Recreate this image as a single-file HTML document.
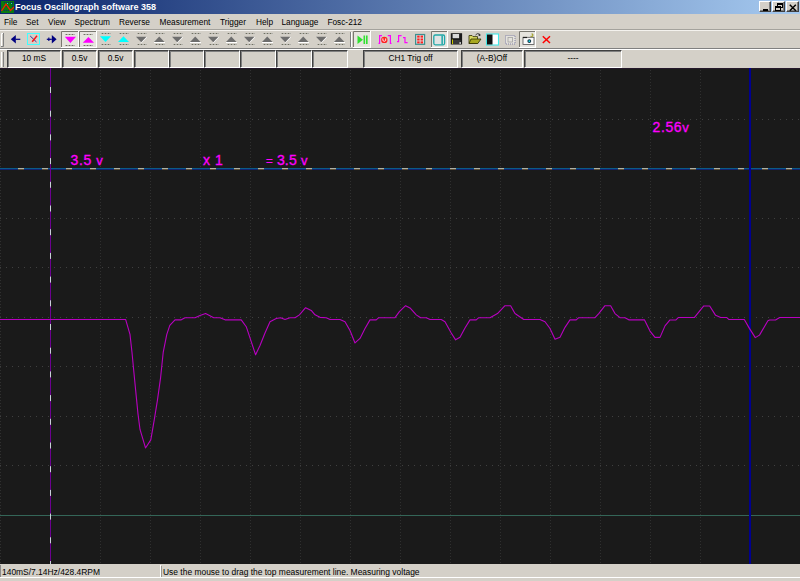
<!DOCTYPE html>
<html><head><meta charset="utf-8">
<style>
*{margin:0;padding:0;box-sizing:border-box}
html,body{width:800px;height:581px;overflow:hidden;background:#d4d0c8;font-family:"Liberation Sans", sans-serif;}
.abs{position:absolute}
#title{left:0;top:0;width:800px;height:14px;background:linear-gradient(to right,#0a246a,#a6caf0);}
#title .t{position:absolute;left:15px;top:1px;font-size:9px;font-weight:bold;color:#fff;line-height:12px;white-space:nowrap}
.menu{position:absolute;top:17px;font-size:8.3px;line-height:11px;color:#000;white-space:nowrap}
.hl{position:absolute;left:0;width:800px;height:1px}
.panel{position:absolute;top:50px;height:18px;border-top:1px solid #404040;border-left:1px solid #404040;border-right:1px solid #fff;border-bottom:1px solid #fff;box-shadow:inset 1px 1px 0 #808080;font-size:8.3px;line-height:15px;text-align:center;color:#000;white-space:nowrap}
#plot{left:0;top:68px;width:800px;height:496px;background:#1a1a1a;border-top:1px solid #24182a}
.lbl{position:absolute;font-size:14px;color:#ff00ff;-webkit-text-stroke:0.3px #ff00ff;letter-spacing:0.6px;line-height:14px;white-space:nowrap}
.wbtn{position:absolute;top:1px;width:13px;height:11px;background:#d4d0c8;border-top:1px solid #fff;border-left:1px solid #fff;border-right:1px solid #404040;border-bottom:1px solid #404040;box-shadow:inset -1px -1px 0 #808080}
.sb{position:absolute;top:567px;font-size:8.45px;line-height:11px;color:#000;white-space:nowrap}
</style></head><body>
<div id="title" class="abs">
  <svg class="abs" style="left:1px;top:1px" width="13" height="12" viewBox="0 0 13 12">
    <rect x="0" y="0" width="13" height="12" fill="#0a7a10"/>
    <g fill="#0a2a6a"><rect x="3" y="1" width="1" height="1"/><rect x="5" y="1" width="1" height="1"/><rect x="7" y="1" width="1" height="1"/><rect x="9" y="1" width="1" height="1"/><rect x="11" y="1" width="1" height="1"/><rect x="11" y="3" width="1" height="1"/><rect x="5" y="5" width="1" height="1"/><rect x="11" y="5" width="1" height="1"/><rect x="3" y="9" width="1" height="1"/><rect x="5" y="9" width="1" height="1"/><rect x="7" y="9" width="1" height="1"/><rect x="9" y="9" width="1" height="1"/></g>
    <rect x="6" y="2" width="1" height="1" fill="#20d0d0"/><rect x="10" y="2" width="1" height="1" fill="#20d0d0"/>
    <polyline points="0.5,10 5,3.2 9.5,9.5 13,6" fill="none" stroke="#f02000" stroke-width="1.3"/>
  </svg>
  <div class="t">Focus Oscillograph software 358</div>
  <div class="wbtn" style="left:759px;width:12px"><div class="abs" style="left:3px;top:7px;width:5px;height:2px;background:#000"></div></div>
  <div class="wbtn" style="left:772px">
    <div class="abs" style="left:4px;top:1px;width:6px;height:5px;border:1px solid #000;border-top-width:2px"></div>
    <div class="abs" style="left:2px;top:4px;width:6px;height:5px;border:1px solid #000;border-top-width:2px;background:#d4d0c8"></div>
  </div>
  <div class="wbtn" style="left:786px"><svg class="abs" style="left:2px;top:2px" width="8" height="8"><path d="M0.8,0.8 L6.8,6.8 M6.8,0.8 L0.8,6.8" stroke="#000" stroke-width="1.5"/></svg></div>
</div>

<div class="menu" style="left:4px">File</div>
<div class="menu" style="left:26px">Set</div>
<div class="menu" style="left:48px">View</div>
<div class="menu" style="left:74.5px">Spectrum</div>
<div class="menu" style="left:119px">Reverse</div>
<div class="menu" style="left:159.6px">Measurement</div>
<div class="menu" style="left:220px">Trigger</div>
<div class="menu" style="left:256px">Help</div>
<div class="menu" style="left:281.5px">Language</div>
<div class="menu" style="left:327.4px">Fosc-212</div>

<div class="hl" style="top:29px;background:#a4a29c"></div>
<div class="hl" style="top:30px;background:#f4f2ee"></div>
<div class="hl" style="top:48px;background:#808080"></div>
<div class="hl" style="top:49px;background:#fff"></div>

<!-- toolbar -->
<svg class="abs" style="left:0;top:31px" width="800" height="17" viewBox="0 31 800 17">
<path d="M1.5,46 L1.5,33.5 L3,33.5" stroke="#fff" fill="none"/><path d="M3.5,33 L3.5,46.5 L1,46.5" stroke="#808080" fill="none"/>
<path d="M10.8,39.3 L15.8,35 L15.8,43.5 Z" fill="#000080"/><rect x="15.5" y="38.7" width="4.8" height="1.2" fill="#000080"/>
<rect x="27.5" y="33.5" width="12" height="11" fill="none" stroke="#40ffff" stroke-width="1"/>
<path d="M30.2,36 L36.5,42" stroke="#3030a0" stroke-width="1"/><path d="M37,35.8 L32.2,41.8" stroke="#ff1010" stroke-width="1.4"/>
<path d="M56.6,39.3 L51.8,35 L51.8,43.5 Z" fill="#000080"/><rect x="46.8" y="38.7" width="5" height="1.2" fill="#000080"/><rect x="48.3" y="37.5" width="1.1" height="3.5" fill="#000080"/>
<rect x="61" y="31" width="18" height="17" fill="#e6e4de"/><path d="M61.5,48 L61.5,31.5 L79,31.5" stroke="#7a7870" fill="none"/><path d="M78.5,31 L78.5,48 M61,47.5 L79,47.5" stroke="#ffffff" fill="none"/>
<rect x="79" y="31" width="18" height="17" fill="#e6e4de"/><path d="M79.5,48 L79.5,31.5 L97,31.5" stroke="#7a7870" fill="none"/><path d="M96.5,31 L96.5,48 M79,47.5 L97,47.5" stroke="#ffffff" fill="none"/>
<path d="M64.8,36.8 L76.0,36.8 L70.39999999999999,43.0 Z" fill="#ff00ff"/>
<path d="M82.8,42.8 L88.39999999999999,37 L94.0,42.8 Z" fill="#ff00ff"/>
<path d="M100,36.2 L111,36.2 L105.5,42.0 Z" fill="#00ffff"/>
<path d="M118,42.0 L123.5,36.2 L129,42.0 Z" fill="#00ffff"/>
<line x1="65" y1="34.5" x2="75" y2="34.5" stroke="#b0b0aa"/>
<line x1="66" y1="34.5" x2="75" y2="34.5" stroke="#707060" stroke-dasharray="1 2"/>
<line x1="65" y1="45.5" x2="75" y2="45.5" stroke="#b0b0aa"/>
<line x1="66" y1="45.5" x2="75" y2="45.5" stroke="#707060" stroke-dasharray="1 2"/>
<line x1="83" y1="34.5" x2="93" y2="34.5" stroke="#b0b0aa"/>
<line x1="84" y1="34.5" x2="93" y2="34.5" stroke="#707060" stroke-dasharray="1 2"/>
<line x1="83" y1="45.5" x2="93" y2="45.5" stroke="#b0b0aa"/>
<line x1="84" y1="45.5" x2="93" y2="45.5" stroke="#707060" stroke-dasharray="1 2"/>
<line x1="101" y1="33.5" x2="111" y2="33.5" stroke="#b0b0aa"/>
<line x1="102" y1="33.5" x2="111" y2="33.5" stroke="#707060" stroke-dasharray="1 2"/>
<line x1="101" y1="44.5" x2="111" y2="44.5" stroke="#b0b0aa"/>
<line x1="102" y1="44.5" x2="111" y2="44.5" stroke="#707060" stroke-dasharray="1 2"/>
<line x1="119" y1="33.5" x2="129" y2="33.5" stroke="#b0b0aa"/>
<line x1="120" y1="33.5" x2="129" y2="33.5" stroke="#707060" stroke-dasharray="1 2"/>
<line x1="119" y1="44.5" x2="129" y2="44.5" stroke="#b0b0aa"/>
<line x1="120" y1="44.5" x2="129" y2="44.5" stroke="#707060" stroke-dasharray="1 2"/>
<line x1="137" y1="33.5" x2="147" y2="33.5" stroke="#b0b0aa"/>
<line x1="138" y1="33.5" x2="147" y2="33.5" stroke="#707060" stroke-dasharray="1 2"/>
<line x1="137" y1="44.5" x2="147" y2="44.5" stroke="#b0b0aa"/>
<line x1="138" y1="44.5" x2="147" y2="44.5" stroke="#707060" stroke-dasharray="1 2"/>
<path d="M146.5,37 L141,42.5" stroke="#fff" stroke-width="1.3"/>
<path d="M136,36.8 L146.5,36.8 L141.25,42.3 Z" fill="#6e6e6e"/>
<line x1="155" y1="33.5" x2="165" y2="33.5" stroke="#b0b0aa"/>
<line x1="156" y1="33.5" x2="165" y2="33.5" stroke="#707060" stroke-dasharray="1 2"/>
<line x1="155" y1="44.5" x2="165" y2="44.5" stroke="#b0b0aa"/>
<line x1="156" y1="44.5" x2="165" y2="44.5" stroke="#707060" stroke-dasharray="1 2"/>
<path d="M154,42.5 L165,42.5" stroke="#fff"/>
<path d="M154,42.0 L159.25,36.5 L164.5,42.0 Z" fill="#6e6e6e"/>
<line x1="173" y1="33.5" x2="183" y2="33.5" stroke="#b0b0aa"/>
<line x1="174" y1="33.5" x2="183" y2="33.5" stroke="#707060" stroke-dasharray="1 2"/>
<line x1="173" y1="44.5" x2="183" y2="44.5" stroke="#b0b0aa"/>
<line x1="174" y1="44.5" x2="183" y2="44.5" stroke="#707060" stroke-dasharray="1 2"/>
<path d="M182.5,37 L177,42.5" stroke="#fff" stroke-width="1.3"/>
<path d="M172,36.8 L182.5,36.8 L177.25,42.3 Z" fill="#6e6e6e"/>
<line x1="191" y1="33.5" x2="201" y2="33.5" stroke="#b0b0aa"/>
<line x1="192" y1="33.5" x2="201" y2="33.5" stroke="#707060" stroke-dasharray="1 2"/>
<line x1="191" y1="44.5" x2="201" y2="44.5" stroke="#b0b0aa"/>
<line x1="192" y1="44.5" x2="201" y2="44.5" stroke="#707060" stroke-dasharray="1 2"/>
<path d="M190,42.5 L201,42.5" stroke="#fff"/>
<path d="M190,42.0 L195.25,36.5 L200.5,42.0 Z" fill="#6e6e6e"/>
<line x1="209" y1="33.5" x2="219" y2="33.5" stroke="#b0b0aa"/>
<line x1="210" y1="33.5" x2="219" y2="33.5" stroke="#707060" stroke-dasharray="1 2"/>
<line x1="209" y1="44.5" x2="219" y2="44.5" stroke="#b0b0aa"/>
<line x1="210" y1="44.5" x2="219" y2="44.5" stroke="#707060" stroke-dasharray="1 2"/>
<path d="M218.5,37 L213,42.5" stroke="#fff" stroke-width="1.3"/>
<path d="M208,36.8 L218.5,36.8 L213.25,42.3 Z" fill="#6e6e6e"/>
<line x1="227" y1="33.5" x2="237" y2="33.5" stroke="#b0b0aa"/>
<line x1="228" y1="33.5" x2="237" y2="33.5" stroke="#707060" stroke-dasharray="1 2"/>
<line x1="227" y1="44.5" x2="237" y2="44.5" stroke="#b0b0aa"/>
<line x1="228" y1="44.5" x2="237" y2="44.5" stroke="#707060" stroke-dasharray="1 2"/>
<path d="M226,42.5 L237,42.5" stroke="#fff"/>
<path d="M226,42.0 L231.25,36.5 L236.5,42.0 Z" fill="#6e6e6e"/>
<line x1="245" y1="33.5" x2="255" y2="33.5" stroke="#b0b0aa"/>
<line x1="246" y1="33.5" x2="255" y2="33.5" stroke="#707060" stroke-dasharray="1 2"/>
<line x1="245" y1="44.5" x2="255" y2="44.5" stroke="#b0b0aa"/>
<line x1="246" y1="44.5" x2="255" y2="44.5" stroke="#707060" stroke-dasharray="1 2"/>
<path d="M254.5,37 L249,42.5" stroke="#fff" stroke-width="1.3"/>
<path d="M244,36.8 L254.5,36.8 L249.25,42.3 Z" fill="#6e6e6e"/>
<line x1="263" y1="33.5" x2="273" y2="33.5" stroke="#b0b0aa"/>
<line x1="264" y1="33.5" x2="273" y2="33.5" stroke="#707060" stroke-dasharray="1 2"/>
<line x1="263" y1="44.5" x2="273" y2="44.5" stroke="#b0b0aa"/>
<line x1="264" y1="44.5" x2="273" y2="44.5" stroke="#707060" stroke-dasharray="1 2"/>
<path d="M262,42.5 L273,42.5" stroke="#fff"/>
<path d="M262,42.0 L267.25,36.5 L272.5,42.0 Z" fill="#6e6e6e"/>
<line x1="281" y1="33.5" x2="291" y2="33.5" stroke="#b0b0aa"/>
<line x1="282" y1="33.5" x2="291" y2="33.5" stroke="#707060" stroke-dasharray="1 2"/>
<line x1="281" y1="44.5" x2="291" y2="44.5" stroke="#b0b0aa"/>
<line x1="282" y1="44.5" x2="291" y2="44.5" stroke="#707060" stroke-dasharray="1 2"/>
<path d="M290.5,37 L285,42.5" stroke="#fff" stroke-width="1.3"/>
<path d="M280,36.8 L290.5,36.8 L285.25,42.3 Z" fill="#6e6e6e"/>
<line x1="299" y1="33.5" x2="309" y2="33.5" stroke="#b0b0aa"/>
<line x1="300" y1="33.5" x2="309" y2="33.5" stroke="#707060" stroke-dasharray="1 2"/>
<line x1="299" y1="44.5" x2="309" y2="44.5" stroke="#b0b0aa"/>
<line x1="300" y1="44.5" x2="309" y2="44.5" stroke="#707060" stroke-dasharray="1 2"/>
<path d="M298,42.5 L309,42.5" stroke="#fff"/>
<path d="M298,42.0 L303.25,36.5 L308.5,42.0 Z" fill="#6e6e6e"/>
<line x1="317" y1="33.5" x2="327" y2="33.5" stroke="#b0b0aa"/>
<line x1="318" y1="33.5" x2="327" y2="33.5" stroke="#707060" stroke-dasharray="1 2"/>
<line x1="317" y1="44.5" x2="327" y2="44.5" stroke="#b0b0aa"/>
<line x1="318" y1="44.5" x2="327" y2="44.5" stroke="#707060" stroke-dasharray="1 2"/>
<path d="M326.5,37 L321,42.5" stroke="#fff" stroke-width="1.3"/>
<path d="M316,36.8 L326.5,36.8 L321.25,42.3 Z" fill="#6e6e6e"/>
<line x1="335" y1="33.5" x2="345" y2="33.5" stroke="#b0b0aa"/>
<line x1="336" y1="33.5" x2="345" y2="33.5" stroke="#707060" stroke-dasharray="1 2"/>
<line x1="335" y1="44.5" x2="345" y2="44.5" stroke="#b0b0aa"/>
<line x1="336" y1="44.5" x2="345" y2="44.5" stroke="#707060" stroke-dasharray="1 2"/>
<path d="M334,42.5 L345,42.5" stroke="#fff"/>
<path d="M334,42.0 L339.25,36.5 L344.5,42.0 Z" fill="#6e6e6e"/>
<line x1="350.5" y1="32" x2="350.5" y2="47" stroke="#808080"/><line x1="351.5" y1="32" x2="351.5" y2="47" stroke="#fff"/>
<rect x="353" y="31" width="18" height="17" fill="#e6e4de"/><path d="M353.5,48 L353.5,31.5 L371,31.5" stroke="#7a7870" fill="none"/><path d="M370.5,31 L370.5,48 M353,47.5 L371,47.5" stroke="#ffffff" fill="none"/>
<path d="M357.5,35.5 L363,39.7 L357.5,44 Z" fill="#30e030"/><rect x="363.5" y="35.5" width="1.6" height="8.5" fill="#30e030"/><rect x="366" y="35.5" width="1.6" height="8.5" fill="#30e030"/>
<path d="M382,35.6 L379.6,35.6 L379.6,43.4 L378.5,43.4 M387.8,35.6 L390.4,35.6 L390.4,43.4 L391.5,43.4" stroke="#ff00ff" fill="none" stroke-width="1.2"/>
<circle cx="384.3" cy="39.9" r="3.2" fill="#ff2020"/><path d="M382.9,38.4 L382.9,40.6 Q384.3,42 385.7,40.6 L385.7,38.4" stroke="#fff" fill="none" stroke-width="0.9"/>
<path d="M397,41.6 L398.6,41.6 L398.6,35.6 L401.6,35.6 M403,37.6 L405,37.6 L405,42.6 L407.6,42.6" stroke="#ff00ff" fill="none" stroke-width="1.2"/>
<rect x="415.6" y="34.5" width="9" height="9.8" fill="#d8d8d8" stroke="#3a9090" stroke-width="1.2"/>
<rect x="417.2" y="35.6" width="2.4" height="2" fill="#ff2020"/>
<rect x="417.2" y="38.5" width="2.4" height="2" fill="#ff2020"/>
<rect x="417.2" y="41.4" width="2.4" height="2" fill="#ff2020"/>
<rect x="420.6" y="35.6" width="2.4" height="2" fill="#ff2020"/>
<rect x="420.6" y="38.5" width="2.4" height="2" fill="#ff2020"/>
<rect x="420.6" y="41.4" width="2.4" height="2" fill="#ff2020"/>
<rect x="431" y="31" width="17" height="17" fill="#e6e4de"/><path d="M431.5,48 L431.5,31.5 L448,31.5" stroke="#7a7870" fill="none"/><path d="M447.5,31 L447.5,48 M431,47.5 L448,47.5" stroke="#ffffff" fill="none"/>
<rect x="433.8" y="35" width="10.8" height="9.8" rx="1.5" fill="#e0e4e4" stroke="#20a8a8" stroke-width="1.3"/><rect x="441.4" y="35.5" width="1.5" height="9" fill="#20a8a8"/>
<rect x="450.8" y="33.2" width="11.3" height="11.3" fill="#1a1a1a"/><rect x="452.6" y="34" width="6.5" height="4.2" fill="#d8d8d8"/><rect x="452.5" y="40" width="8" height="4" fill="#383838"/><rect x="452" y="39.5" width="1" height="4.5" fill="#c8c800"/><rect x="459.5" y="42" width="1.3" height="2" fill="#e0e0e0"/>
<path d="M469,35.5 L472,35.5 L473,36.6 L477.5,36.6 L477.5,43.5 L469,43.5 Z" fill="#d8d860" stroke="#303000" stroke-width="0.8"/><path d="M471,39 L481,39 L477.8,43.5 L469,43.5 Z" fill="#a8a820" stroke="#303000" stroke-width="0.8"/><path d="M475.5,35 Q477,32.8 479.5,34 L479.5,36 M478.3,35 L480.7,35" stroke="#303030" fill="none" stroke-width="0.9"/>
<rect x="486.5" y="34" width="12" height="11" fill="#fff" stroke="#40e8e8" stroke-width="1.1"/><rect x="487" y="34.5" width="5.5" height="10" fill="#101010"/>
<rect x="505.5" y="35.5" width="9.5" height="8.5" fill="#e4e2dc" stroke="#7878a0" stroke-width="0.9" stroke-dasharray="1 1"/><rect x="508" y="37.5" width="4.5" height="4.5" fill="none" stroke="#a0a0a0" stroke-width="0.8"/>
<rect x="519" y="31" width="17" height="17" fill="#e6e4de"/><path d="M519.5,48 L519.5,31.5 L536,31.5" stroke="#7a7870" fill="none"/><path d="M535.5,31 L535.5,48 M519,47.5 L536,47.5" stroke="#ffffff" fill="none"/>
<rect x="523" y="37.3" width="11" height="7.2" fill="#fafafa" stroke="#505050" stroke-width="0.8"/><path d="M523,37.5 L527,37.5" stroke="#202020" stroke-width="1.2"/><circle cx="529.3" cy="41.1" r="1.9" fill="#103040"/><circle cx="529.3" cy="41.1" r="0.9" fill="#20e0f0"/><path d="M530.5,36.3 L532.8,36.3 L532.8,34 L531.5,34" stroke="#909000" fill="none" stroke-width="0.9"/>
<path d="M542.8,36.3 L550,43 M550,36.3 L542.8,43" stroke="#ff0000" stroke-width="1.5"/>
</svg>

<!-- status row -->
<div class="abs" style="left:1px;top:52px;width:1px;height:15px;background:#fff"></div>
<div class="abs" style="left:3px;top:52px;width:1px;height:15px;background:#808080"></div>
<div class="panel" style="left:7px;width:54px">10 mS</div>
<div class="panel" style="left:62px;width:35px">0.5v</div>
<div class="panel" style="left:98px;width:35px">0.5v</div>
<div class="panel" style="left:134px;width:35px"></div>
<div class="panel" style="left:169px;width:35px"></div>
<div class="panel" style="left:204px;width:36px"></div>
<div class="panel" style="left:240px;width:36px"></div>
<div class="panel" style="left:276px;width:36px"></div>
<div class="panel" style="left:312px;width:36px"></div>
<div class="panel" style="left:363px;width:95px">CH1 Trig off</div>
<div class="panel" style="left:461px;width:62px">(A-B)Off</div>
<div class="panel" style="left:524px;width:98px">----</div>

<div id="plot" class="abs"></div>
<svg class="abs" style="left:0;top:0" width="800" height="581">
<line x1="0.5" y1="70" x2="0.5" y2="564" stroke="#303030" stroke-width="1" stroke-dasharray="1 2"/>
<line x1="50.5" y1="70" x2="50.5" y2="564" stroke="#303030" stroke-width="1" stroke-dasharray="1 2"/>
<line x1="100.5" y1="70" x2="100.5" y2="564" stroke="#303030" stroke-width="1" stroke-dasharray="1 2"/>
<line x1="150.5" y1="70" x2="150.5" y2="564" stroke="#303030" stroke-width="1" stroke-dasharray="1 2"/>
<line x1="200.5" y1="70" x2="200.5" y2="564" stroke="#303030" stroke-width="1" stroke-dasharray="1 2"/>
<line x1="250.5" y1="70" x2="250.5" y2="564" stroke="#303030" stroke-width="1" stroke-dasharray="1 2"/>
<line x1="300.5" y1="70" x2="300.5" y2="564" stroke="#303030" stroke-width="1" stroke-dasharray="1 2"/>
<line x1="350.5" y1="70" x2="350.5" y2="564" stroke="#303030" stroke-width="1" stroke-dasharray="1 2"/>
<line x1="400.5" y1="70" x2="400.5" y2="564" stroke="#303030" stroke-width="1" stroke-dasharray="1 2"/>
<line x1="450.5" y1="70" x2="450.5" y2="564" stroke="#303030" stroke-width="1" stroke-dasharray="1 2"/>
<line x1="500.5" y1="70" x2="500.5" y2="564" stroke="#303030" stroke-width="1" stroke-dasharray="1 2"/>
<line x1="550.5" y1="70" x2="550.5" y2="564" stroke="#303030" stroke-width="1" stroke-dasharray="1 2"/>
<line x1="600.5" y1="70" x2="600.5" y2="564" stroke="#303030" stroke-width="1" stroke-dasharray="1 2"/>
<line x1="650.5" y1="70" x2="650.5" y2="564" stroke="#303030" stroke-width="1" stroke-dasharray="1 2"/>
<line x1="700.5" y1="70" x2="700.5" y2="564" stroke="#303030" stroke-width="1" stroke-dasharray="1 2"/>
<line x1="750.5" y1="70" x2="750.5" y2="564" stroke="#303030" stroke-width="1" stroke-dasharray="1 2"/>
<line x1="800.5" y1="70" x2="800.5" y2="564" stroke="#303030" stroke-width="1" stroke-dasharray="1 2"/>
<line x1="0" y1="119.5" x2="800" y2="119.5" stroke="#404040" stroke-width="1" stroke-dasharray="1 5"/>
<line x1="0" y1="168.5" x2="800" y2="168.5" stroke="#404040" stroke-width="1" stroke-dasharray="1 5"/>
<line x1="0" y1="218.5" x2="800" y2="218.5" stroke="#404040" stroke-width="1" stroke-dasharray="1 5"/>
<line x1="0" y1="267.5" x2="800" y2="267.5" stroke="#404040" stroke-width="1" stroke-dasharray="1 5"/>
<line x1="0" y1="317.5" x2="800" y2="317.5" stroke="#404040" stroke-width="1" stroke-dasharray="1 5"/>
<line x1="0" y1="366.5" x2="800" y2="366.5" stroke="#404040" stroke-width="1" stroke-dasharray="1 5"/>
<line x1="0" y1="416.5" x2="800" y2="416.5" stroke="#404040" stroke-width="1" stroke-dasharray="1 5"/>
<line x1="0" y1="465.5" x2="800" y2="465.5" stroke="#404040" stroke-width="1" stroke-dasharray="1 5"/>
<line x1="0" y1="515.5" x2="800" y2="515.5" stroke="#404040" stroke-width="1" stroke-dasharray="1 5"/>
<line x1="0" y1="168.5" x2="800" y2="168.5" stroke="#0a5a88" stroke-width="1"/>
<line x1="0" y1="169.5" x2="800" y2="169.5" stroke="#102470" stroke-width="1"/>
<line x1="18" y1="168.5" x2="800" y2="168.5" stroke="#b0b0a8" stroke-width="1" stroke-dasharray="6 18"/>
<line x1="18" y1="169.5" x2="800" y2="169.5" stroke="#5c5238" stroke-width="1" stroke-dasharray="6 18"/>
<line x1="0" y1="515.5" x2="800" y2="515.5" stroke="#346658" stroke-width="1"/>
<line x1="50.5" y1="68" x2="50.5" y2="564" stroke="#6c0090" stroke-width="1"/>
<line x1="50.5" y1="87" x2="50.5" y2="564" stroke="#c8d0d8" stroke-width="1" stroke-dasharray="6 17.7"/>
<rect x="749" y="68" width="2" height="496" fill="#000090"/>
<polyline points="0,319.45 125.6,319.45 130,334.45 132,352.45 134.5,378.45 136.6,399.85 138,414.05 140,429.45 145.5,447.95 150.8,439.85 154,421.45 157.3,401.15 160.5,378.45 163.2,352.45 166.8,334.45 169.8,325.45 175,319.85 181.25,319.85 185,317.70 195,317.70 200,315.45 205.6,313.55 213.75,317.70 220,317.70 225,319.85 241.25,319.85 246.25,326.70 250,337.95 255.6,354.85 260,345.45 265,332.95 270,321.70 276.25,318.55 280.6,317.70 285,319.45 290,317.70 295,317.70 299.4,314.85 305.6,307.70 311.25,310.45 315,314.85 320,317.35 326.25,317.70 330,319.45 340,319.45 345,321.70 350,330.45 355,342.95 360,338.45 365,328.45 370,319.85 376.25,319.85 378.75,317.70 395,317.70 399.4,311.70 405.6,305.70 410,307.95 416.25,314.85 420.6,317.70 426.25,317.70 430,319.45 441.25,319.45 445,321.70 451.25,332.95 455.6,339.85 460,337.35 465,327.95 470,319.85 476.25,319.85 478.75,317.70 490,317.70 497.5,313.55 505,305.70 510.6,305.70 515,313.55 523.75,319.45 540,319.45 545,321.70 550,328.55 555,339.20 560,337.35 565,327.35 570,319.85 576.25,319.85 578.75,317.70 595,317.70 598.75,313.55 605,305.70 610.6,305.70 615,313.55 620,317.70 625,317.70 628.75,319.85 644.4,319.85 650,331.05 655,337.35 660,337.35 665,325.85 670,319.95 676,319.95 678.5,317.45 694.5,317.45 703.8,305.95 709.7,305.95 715.6,315.35 720.7,317.45 726.6,317.45 729,319.55 744.3,319.55 749.4,328.35 755.3,337.65 759.5,335.15 767.9,320.75 769.6,319.95 775.5,319.95 779.7,317.45 800,317.45" fill="none" stroke="#b800c0" stroke-width="1.1" stroke-linejoin="round"/>
</svg>
<div class="lbl" style="left:70.5px;top:153.3px">3.5 <span style="font-size:13px">v</span></div>
<div class="lbl" style="left:203px;top:153.3px">x 1</div>
<div class="lbl" style="left:266px;top:153.3px;letter-spacing:0.15px"><span style="font-size:11.5px">=</span> 3.5 <span style="font-size:13px">v</span></div>
<div class="lbl" style="left:652.5px;top:119.8px">2.56<span style="font-size:13px">v</span></div>

<!-- status bar -->
<div class="sb" style="left:2px">140mS/7.14Hz/428.4RPM</div>
<div class="abs" style="left:160px;top:565px;width:1px;height:12px;background:#fff"></div>
<div class="abs" style="left:161px;top:566px;width:1px;height:11px;background:#9a9890"></div>
<div class="sb" style="left:163px">Use the mouse to drag the top measurement line. Measuring voltage</div>
<div class="hl" style="top:577px;background:#fff"></div>
<div class="abs" style="left:0;top:565px;width:1px;height:12px;background:#8a8a8a"></div>
</body></html>
